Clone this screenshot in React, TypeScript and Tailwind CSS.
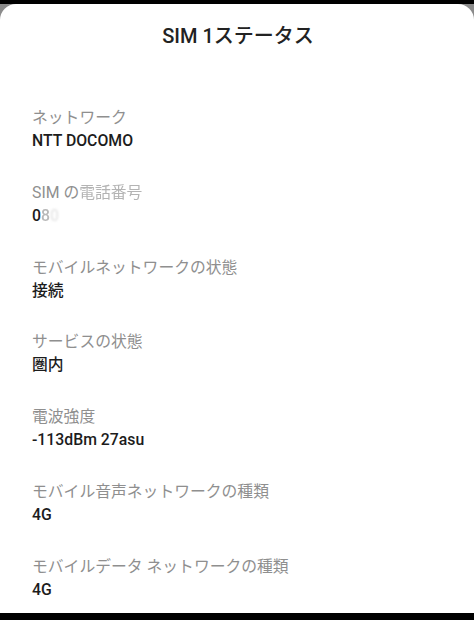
import React from "react";

const FONT = { fontFamily: 'Roboto, "Noto Sans CJK JP", "Noto Sans", sans-serif' };

type Row = { label: React.ReactNode; value: React.ReactNode };

const rows: Row[] = [
  { label: "ネットワーク", value: "NTT DOCOMO" },
  {
    label: (
      <>
        SIM の
        <span className="inline-block text-[#b4b4b4] blur-[0.6px]">電話番号</span>
      </>
    ),
    value: (
      <>
        0<span className="inline-block text-[#b8b8b8] blur-[0.6px]">8</span>
        <span className="inline-block text-[#e6e6e6] blur-[1px]">0</span>
      </>
    ),
  },
  { label: "モバイルネットワークの状態", value: "接続" },
  { label: "サービスの状態", value: "圏内" },
  { label: "電波強度", value: "-113dBm 27asu" },
  { label: "モバイル音声ネットワークの種類", value: "4G" },
  { label: "モバイルデータ ネットワークの種類", value: "4G" },
];

export default function App() {
  return (
    <div className="w-[474px] h-[620px] bg-black pt-[4px] flex flex-col overflow-hidden" style={FONT}>
      <div className="h-[609px] bg-gradient-to-b from-[#8a8a8a] via-[#d0d0d0] to-white">
        <div className="h-full bg-white rounded-t-[16px] flex flex-col overflow-hidden">
          <div className="mt-[18px] h-[28px] leading-[28px] text-center text-[20px] font-medium text-[#222222] pl-[2px]">
            SIM 1ステータス
          </div>
          <div className="mt-[57px] pl-[32px] flex flex-col gap-y-[29.8px]">
            {rows.map((r, i) => (
              <div key={i} className="flex flex-col">
                <div className="text-[15.8px] leading-[22px] text-[#8f8f8f]">{r.label}</div>
                <div className="mt-[1px] text-[15.8px] leading-[22px] font-medium text-[#1c1c1c]">{r.value}</div>
              </div>
            ))}
          </div>
        </div>
      </div>
      <div className="flex-1 bg-black" />
    </div>
  );
}
